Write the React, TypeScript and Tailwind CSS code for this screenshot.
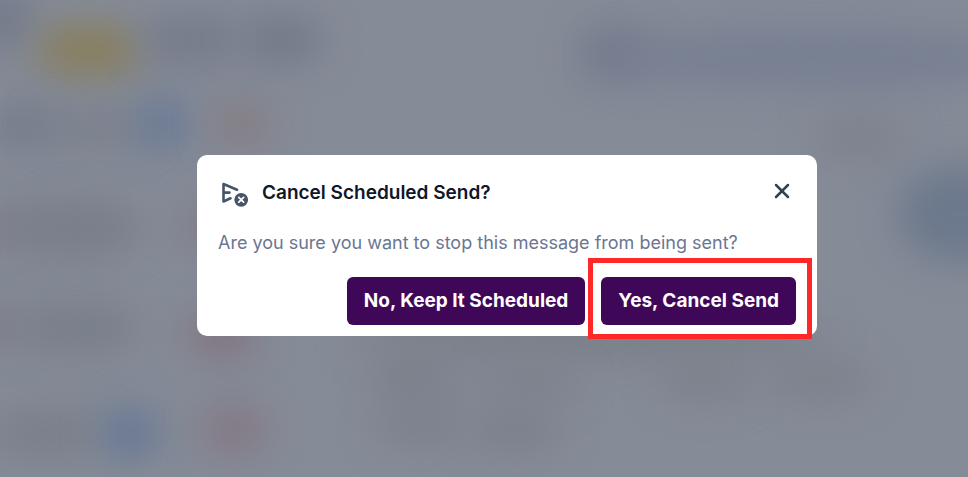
import { X } from "lucide-react";

// Soft shapes of the page that sits behind the overlay
const shapes = [
  { cx: 0, cy: 18, rx: 34, ry: 32, fill: "#747b8b" },
  { cx: 88, cy: 50, rx: 54, ry: 28, fill: "#887f60" },
  { cx: 190, cy: 40, rx: 50, ry: 24, fill: "#757b8a" },
  { cx: 282, cy: 40, rx: 42, ry: 24, fill: "#737988" },
  { cx: 24, cy: 126, rx: 38, ry: 20, fill: "#757b8a" },
  { cx: 94, cy: 128, rx: 54, ry: 18, fill: "#7a808c" },
  { cx: 162, cy: 124, rx: 27, ry: 26, fill: "#687995" },
  { cx: 241, cy: 124, rx: 30, ry: 20, fill: "#857b81" },
  { cx: 40, cy: 228, rx: 56, ry: 24, fill: "#7a808b" },
  { cx: 92, cy: 228, rx: 50, ry: 26, fill: "#797e8a" },
  { cx: 0, cy: 228, rx: 12, ry: 18, fill: "#807c86" },
  { cx: 205, cy: 226, rx: 18, ry: 26, fill: "#7f7984" },
  { cx: 0, cy: 326, rx: 14, ry: 22, fill: "#7b7580" },
  { cx: 76, cy: 328, rx: 64, ry: 28, fill: "#797f8a" },
  { cx: 222, cy: 334, rx: 36, ry: 24, fill: "#81757f" },
  { cx: 44, cy: 433, rx: 58, ry: 26, fill: "#7a808a" },
  { cx: 130, cy: 433, rx: 31, ry: 26, fill: "#687894" },
  { cx: 234, cy: 429, rx: 32, ry: 26, fill: "#847883" },
  { cx: 615, cy: 54, rx: 38, ry: 26, fill: "#747a8c" },
  { cx: 815, cy: 58, rx: 215, ry: 30, fill: "#777f92" },
  { cx: 860, cy: 138, rx: 44, ry: 20, fill: "#7c818b" },
  { cx: 960, cy: 214, rx: 62, ry: 48, fill: "#6c788c" },
  { cx: 590, cy: 338, rx: 240, ry: 22, fill: "#7a8089" },
  { cx: 412, cy: 380, rx: 38, ry: 24, fill: "#7b808a" },
  { cx: 530, cy: 384, rx: 46, ry: 20, fill: "#7d828c" },
  { cx: 705, cy: 380, rx: 46, ry: 20, fill: "#7c818b" },
  { cx: 820, cy: 380, rx: 52, ry: 20, fill: "#7c818b" },
  { cx: 420, cy: 424, rx: 46, ry: 22, fill: "#7c818c" },
  { cx: 515, cy: 430, rx: 46, ry: 22, fill: "#7b808b" },
];

function Backdrop() {
  return (
    <svg
      viewBox="0 0 968 477"
      preserveAspectRatio="xMidYMid slice"
      className="absolute inset-0 h-full w-full"
      aria-hidden="true"
    >
      <defs>
        <filter id="soften" x="-200%" y="-200%" width="500%" height="500%" colorInterpolationFilters="sRGB">
          <feGaussianBlur stdDeviation="18" />
        </filter>
      </defs>
      {shapes.map((s, i) => (
        <ellipse key={i} {...s} filter="url(#soften)" />
      ))}
    </svg>
  );
}

function CancelSendIcon() {
  return (
    <svg width="32" height="28" viewBox="0 0 32 28" fill="none" aria-hidden="true">
      <path
        d="M19 10.7 5.5 5v17.5l7-3.2M5.5 13.6h6"
        stroke="#475569"
        strokeWidth="2.6"
        strokeLinecap="round"
        strokeLinejoin="round"
      />
      <circle cx="23.2" cy="20.8" r="6.9" fill="#475569" />
      <path d="m20.8 18.4 4.8 4.8m0-4.8-4.8 4.8" stroke="#fff" strokeWidth="1.8" strokeLinecap="round" />
    </svg>
  );
}

export default function App() {
  return (
    <main className="relative flex min-h-screen items-center justify-center overflow-hidden bg-[#858b97] pt-[14px] pl-[46px] font-[Inter,sans-serif]">
      <Backdrop />

      <div
        role="dialog"
        aria-modal="true"
        aria-labelledby="dialog-title"
        aria-describedby="dialog-text"
        className="relative w-full max-w-[620px] rounded-[10px] bg-white px-[21px] pt-6 pb-[11px]"
      >
        {/* Header */}
        <div className="flex items-start">
          <CancelSendIcon />
          <h2 id="dialog-title" className="ml-3 flex-1 text-[19px] leading-7 font-semibold text-[#0f172a]">
            Cancel Scheduled Send?
          </h2>
          <button type="button" aria-label="Close" className="flex h-6 w-7 items-center justify-center text-[#334155]">
            <X size={24} strokeWidth={2.5} />
          </button>
        </div>

        <p id="dialog-text" className="mt-[22px] text-[18px] leading-7 text-[#6b7690]">
          Are you sure you want to stop this message from being sent?
        </p>

        {/* Actions */}
        <div className="mt-5 flex justify-end gap-4">
          <button type="button" className="h-12 rounded-md bg-[#3f0757] px-[17px] text-[19px] font-bold text-white">
            No, Keep It Scheduled
          </button>
          <div className="relative">
            <button type="button" className="h-12 rounded-md bg-[#3f0757] px-[17px] text-[19px] font-bold text-white">
              Yes, Cancel Send
            </button>
            <span className="pointer-events-none absolute -top-[19px] -right-4 -bottom-[14px] -left-[13px] border-[5px] border-[#ff2828]" />
          </div>
        </div>
      </div>
    </main>
  );
}
